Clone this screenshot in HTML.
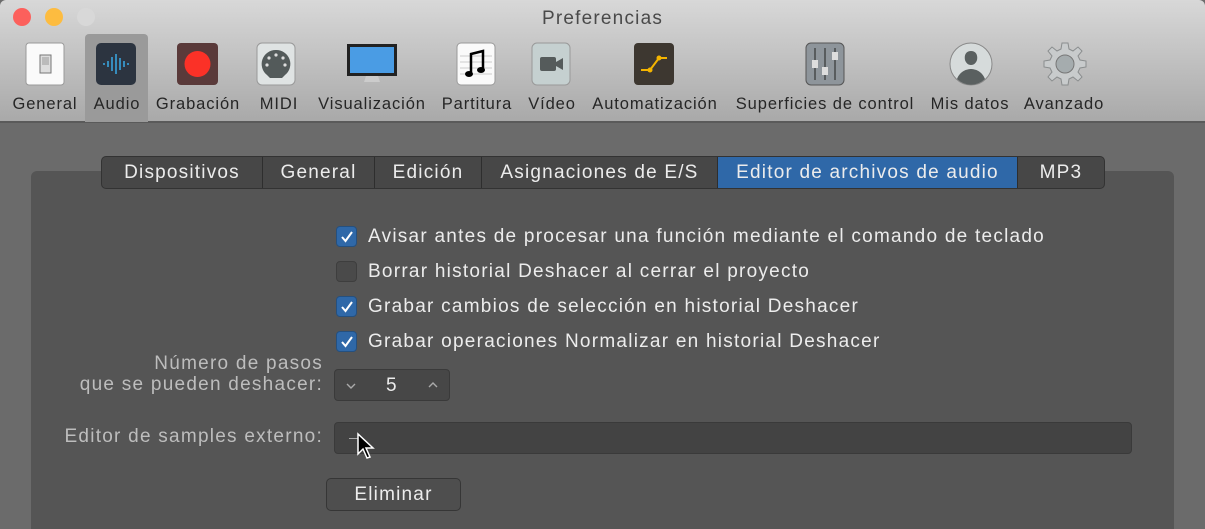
<!DOCTYPE html>
<html><head><meta charset="utf-8"><style>
*{margin:0;padding:0;box-sizing:border-box}
html,body{width:1205px;height:529px;overflow:hidden}
body{background:#6b6b6b;font-family:"Liberation Sans",sans-serif;position:relative}
.top{position:absolute;left:0;top:0;width:1205px;height:123px;background:linear-gradient(#d8d8d8,#a9a9a9);border-bottom:2px solid #5a5a5a;border-radius:6px 6px 0 0}
.dot{position:absolute;top:8px;width:18px;height:18px;border-radius:50%}
.title{position:absolute;top:8px;left:0;width:1205px;text-align:center;font-size:19px;color:#4a4a4a;letter-spacing:1.2px}
.sel{position:absolute;left:85px;top:34px;width:63px;height:88px;background:#9a9a9a;border-radius:4px 4px 0 0}
.lbl{position:absolute;top:95px;font-size:16.5px;color:#262626;transform:translateX(-50%);white-space:nowrap;letter-spacing:0.9px}
.ic{position:absolute;top:42px;width:44px;height:44px;transform:translateX(-50%)}
.panel{position:absolute;left:31px;top:171px;width:1143px;height:358px;background:#555;border-radius:6px 6px 0 0}
.tabs{position:absolute;left:101px;top:156px;height:33px;display:flex;background:#474747;border:1px solid #333;border-radius:5px;overflow:hidden}
.tab{height:31px;line-height:32px;font-size:19px;color:#ececec;text-align:center;border-right:1px solid #2e2e2e;letter-spacing:1.2px;white-space:nowrap}
.cb{position:absolute;left:336px;width:21px;height:21px;border-radius:4px;background:#2f68a8;border:1px solid #25507f}
.cb.off{background:#4a4a4a;border-color:#3e3e3e}
.cb svg{position:absolute;left:3px;top:3px}
.t{position:absolute;left:368px;font-size:19px;color:#ececec;white-space:nowrap;letter-spacing:1.25px}
.r{position:absolute;right:882px;font-size:19px;color:#bdbdbd;text-align:right;white-space:nowrap;line-height:21px;letter-spacing:1.25px}
</style></head><body>
<div class="top"></div>
<div class="dot" style="left:13px;background:#fc605c"></div>
<div class="dot" style="left:45px;background:#fdbc40"></div>
<div class="dot" style="left:77px;background:#d8d8d8"></div>
<div class="title">Preferencias</div>
<div class="sel"></div>
<div class="ic" style="left:46px"><svg width="44" height="44"><rect x="2" y="1" width="38" height="42" rx="3" fill="#fafafa" stroke="#999"/><rect x="16" y="13" width="11" height="18" fill="#ddd" stroke="#777"/><rect x="18" y="15" width="7" height="8" fill="#bbb"/></svg></div>
<div class="ic" style="left:117px"><svg width="44" height="44"><rect x="1" y="1" width="40" height="42" rx="5" fill="#2c3440"/><g stroke="#3aa9e6" stroke-width="1.5"><line x1="9" y1="21" x2="9" y2="23"/><line x1="13" y1="19" x2="13" y2="25"/><line x1="17" y1="15" x2="17" y2="29"/><line x1="21" y1="12" x2="21" y2="32"/><line x1="25" y1="16" x2="25" y2="28"/><line x1="29" y1="19" x2="29" y2="25"/><line x1="33" y1="21" x2="33" y2="23"/></g></svg></div>
<div class="ic" style="left:198px"><svg width="44" height="44"><rect x="1" y="1" width="41" height="42" rx="4" fill="#5a3a3a"/><circle cx="21.5" cy="22" r="13" fill="#fb3127"/></svg></div>
<div class="ic" style="left:277px"><svg width="44" height="44"><rect x="2" y="1" width="38" height="42" rx="5" fill="#dfe3e3" stroke="#999"/><path d="M21 8a14 14 0 0 0-9 25l3 3h12l3-3a14 14 0 0 0-9-25z" fill="#535a5a"/><g fill="#ddd"><circle cx="21" cy="13" r="1.6"/><circle cx="14" cy="16" r="1.6"/><circle cx="28" cy="16" r="1.6"/><circle cx="12" cy="23" r="1.6"/><circle cx="30" cy="23" r="1.6"/></g></svg></div>
<div class="ic" style="left:372px;width:52px"><svg width="52" height="44"><rect x="1" y="2" width="50" height="32" fill="#222"/><rect x="4" y="5" width="44" height="26" fill="#4a9ce4"/><path d="M20 34h12l2 6H18z" fill="#ccc"/></svg></div>
<div class="ic" style="left:477px"><svg width="44" height="44"><rect x="2" y="1" width="38" height="42" rx="4" fill="#fafafa" stroke="#999"/><g stroke="#ccc"><line x1="5" y1="14" x2="37" y2="14"/><line x1="5" y1="20" x2="37" y2="20"/><line x1="5" y1="26" x2="37" y2="26"/><line x1="5" y1="32" x2="37" y2="32"/></g><path d="M16 31V12l12-3v18" stroke="#000" stroke-width="2.5" fill="none"/><ellipse cx="14" cy="32" rx="4" ry="3" fill="#000"/><ellipse cx="26" cy="28" rx="4" ry="3" fill="#000"/></svg></div>
<div class="ic" style="left:552px"><svg width="44" height="44"><rect x="2" y="1" width="38" height="42" rx="5" fill="#c5d0d0" stroke="#999"/><rect x="10" y="15" width="16" height="14" rx="2" fill="#555b5b"/><path d="M26 20l7-4v12l-7-4z" fill="#555b5b"/></svg></div>
<div class="ic" style="left:655px"><svg width="44" height="44"><rect x="1" y="1" width="40" height="42" rx="4" fill="#3d3730"/><g stroke="#f4b400" stroke-width="2" fill="none"><path d="M8 28h9l9-12h8"/></g><circle cx="17" cy="28" r="2.5" fill="#f4b400"/><circle cx="26" cy="16" r="2.5" fill="#f4b400"/></svg></div>
<div class="ic" style="left:826px"><svg width="44" height="44"><rect x="2" y="1" width="38" height="42" rx="5" fill="#8e959b" stroke="#555"/><g stroke="#222"><line x1="11" y1="6" x2="11" y2="38"/><line x1="21" y1="6" x2="21" y2="38"/><line x1="31" y1="6" x2="31" y2="38"/></g><rect x="8" y="18" width="6" height="8" fill="#ddd"/><rect x="18" y="25" width="6" height="8" fill="#ddd"/><rect x="28" y="10" width="6" height="8" fill="#ddd"/></svg></div>
<div class="ic" style="left:971px"><svg width="44" height="44"><circle cx="22" cy="22" r="21" fill="#d6dbdb" stroke="#888"/><path d="M22 9c-5 0-7 4-6 9 1 3 3 5 6 5s5-2 6-5c1-5-1-9-6-9zM8 37c3-8 10-10 14-10s11 2 14 10a20 20 0 0 1-28 0z" fill="#5a6060"/></svg></div>
<div class="ic" style="left:1065px"><svg width="44" height="44"><g fill="#c8cbcc" stroke="#8a8d8e"><path d="M19 1h6l1 6 4 2 5-4 4 4-4 5 2 4 6 1v6l-6 1-2 4 4 5-4 4-5-4-4 2-1 6h-6l-1-6-4-2-5 4-4-4 4-5-2-4-6-1v-6l6-1 2-4-4-5 4-4 5 4 4-2z"/></g><circle cx="22" cy="22" r="9" fill="#a5acae" stroke="#777"/></svg></div>
<div class="lbl" style="left:45px">General</div>
<div class="lbl" style="left:117px">Audio</div>
<div class="lbl" style="left:198px">Grabación</div>
<div class="lbl" style="left:279px">MIDI</div>
<div class="lbl" style="left:372px">Visualización</div>
<div class="lbl" style="left:477px">Partitura</div>
<div class="lbl" style="left:552px">Vídeo</div>
<div class="lbl" style="left:655px">Automatización</div>
<div class="lbl" style="left:825px">Superficies de control</div>
<div class="lbl" style="left:970px">Mis datos</div>
<div class="lbl" style="left:1064px">Avanzado</div>

<div class="panel"></div>
<div class="tabs">
<div class="tab" style="width:161px">Dispositivos</div>
<div class="tab" style="width:112px">General</div>
<div class="tab" style="width:107px">Edición</div>
<div class="tab" style="width:236px">Asignaciones de E/S</div>
<div class="tab" style="width:300px;background:#2f68a8">Editor de archivos de audio</div>
<div class="tab" style="width:86px;border-right:0">MP3</div>
</div>

<div class="cb" style="top:226px"><svg width="14" height="14"><path d="M2 7l3.5 4L12 2" stroke="#fff" stroke-width="2" fill="none"/></svg></div>
<div class="t" style="top:226px">Avisar antes de procesar una función mediante el comando de teclado</div>
<div class="cb off" style="top:261px"></div>
<div class="t" style="top:261px">Borrar historial Deshacer al cerrar el proyecto</div>
<div class="cb" style="top:296px"><svg width="14" height="14"><path d="M2 7l3.5 4L12 2" stroke="#fff" stroke-width="2" fill="none"/></svg></div>
<div class="t" style="top:296px">Grabar cambios de selección en historial Deshacer</div>
<div class="cb" style="top:331px"><svg width="14" height="14"><path d="M2 7l3.5 4L12 2" stroke="#fff" stroke-width="2" fill="none"/></svg></div>
<div class="t" style="top:331px">Grabar operaciones Normalizar en historial Deshacer</div>

<div class="r" style="top:353px">Número de pasos<br>que se pueden deshacer:</div>
<div style="position:absolute;left:334px;top:369px;width:116px;height:32px;background:#474747;border:1px solid #3a3a3a;border-radius:4px;color:#ececec;font-size:19px">
<svg style="position:absolute;left:10px;top:12px" width="12" height="8"><path d="M2 2l4 4 4-4" stroke="#aaa" stroke-width="1.4" fill="none"/></svg>
<span style="position:absolute;left:51px;top:5px">5</span>
<svg style="position:absolute;left:92px;top:11px" width="12" height="8"><path d="M2 6l4-4 4 4" stroke="#aaa" stroke-width="1.4" fill="none"/></svg>
</div>
<div class="r" style="top:426px">Editor de samples externo:</div>
<div style="position:absolute;left:334px;top:422px;width:798px;height:32px;background:#434343;border:1px solid #3a3a3a;border-radius:4px"></div>
<div style="position:absolute;left:349px;top:438px;width:10px;height:1px;background:#aaa"></div>
<svg style="position:absolute;left:356px;top:432px" width="22" height="30"><path d="M2 2v20l5-5 4 9 3-1-4-9h7z" fill="#000" stroke="#fff" stroke-width="1.5"/></svg>
<div style="position:absolute;left:326px;top:478px;width:135px;height:33px;background:#4e4e4e;border:1px solid #363636;border-radius:5px;color:#ececec;font-size:19px;text-align:center;line-height:32px;letter-spacing:1.2px">Eliminar</div>
</body></html>
